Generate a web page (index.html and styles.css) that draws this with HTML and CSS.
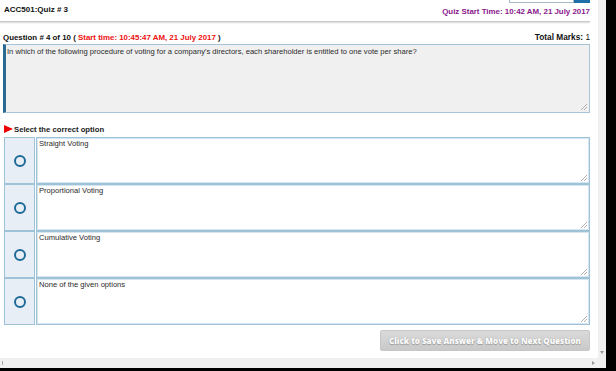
FILE: index.html
```html
<!DOCTYPE html>
<html>
<head>
<meta charset="utf-8">
<link rel="stylesheet" href="styles.css">
</head>
<body>
<div class="window">
  <div class="page">
    <div class="tabbar"><div class="tab"><span class="tab-l"></span><span class="tab-r"></span></div></div>
    <div class="header">
      <div class="quiz-title">ACC501:Quiz # 3</div>
      <div class="quiz-start">Quiz Start Time: 10:42 AM, 21 July 2017</div>
    </div>
    <div class="separator"></div>
    <div class="qrow">
      <div class="qnum">Question # 4 of 10 ( <span class="red">Start time: 10:45:47 AM, 21 July 2017</span> )</div>
      <div class="marks"><b>Total Marks:</b> 1</div>
    </div>
    <div class="question">In which of the following procedure of voting for a company's directors, each shareholder is entitled to one vote per share?<span class="grip"></span></div>
    <div class="select"><span class="flag"></span>Select the correct option</div>
    <div class="options">
      <div class="opt"><div class="radio-cell"><span class="radio"></span></div><div class="opt-text">Straight Voting<span class="grip"></span></div></div>
      <div class="opt"><div class="radio-cell"><span class="radio"></span></div><div class="opt-text">Proportional Voting<span class="grip"></span></div></div>
      <div class="opt"><div class="radio-cell"><span class="radio"></span></div><div class="opt-text">Cumulative Voting<span class="grip"></span></div></div>
      <div class="opt"><div class="radio-cell"><span class="radio"></span></div><div class="opt-text">None of the given options<span class="grip"></span></div></div>
    </div>
    <div class="actions"><button class="next">Click to Save Answer &amp; Move to Next Question</button></div>
  </div>
  <div class="vscroll"><span class="arr-down"></span></div>
  <div class="hscroll"><span class="arr-left"></span><span class="arr-right"></span></div>
  <div class="corner"></div>
</div>
</body>
</html>
```
FILE: styles.css
```css
html, body { margin: 0; padding: 0; }
body { background: #000; width: 616px; height: 371px; overflow: hidden; font-family: "Liberation Sans", Arial, sans-serif; }
.window { width: 606px; height: 368px; display: grid; grid-template-columns: 598px 8px; grid-template-rows: 358px 10px; background: #fff; }
.page { overflow: hidden; background: #fff; padding: 0 8px 0 0; display: flex; flex-direction: column; }
.tabbar { height: 3px; display: flex; justify-content: flex-end; }
.tab { display: flex; width: 81px; height: 3px; }
.tab-l { flex: 1; border: 1px solid #aab8c4; border-top: none; background: #fff; }
.tab-r { width: 16px; background: #1e6ea8; }
.header { height: 18px; display: flex; justify-content: space-between; padding-left: 4px; }
.quiz-title { font-size: 8px; font-weight: bold; color: #111; padding-top: 2px; }
.quiz-start { font-size: 7.9px; font-weight: bold; color: #8a1a8c; padding-top: 4px; }
.separator { height: 3px; background: linear-gradient(#bdbdbd, #e9e9e9 60%, #fff); }
.qrow { display: flex; justify-content: space-between; align-items: center; margin-top: 7px; height: 12px; padding-left: 3px; }
.qnum { font-size: 7.9px; font-weight: bold; color: #111; }
.red { color: #f01010; }
.marks { font-size: 8.3px; color: #111; }
.marks b { font-weight: bold; }
.question { position: relative; margin: 1px 0 0 3px; height: 63px; background: #f0f0f0; border: 1px solid #a7c4d8; border-left: 3px solid #2b6a92; padding: 2px 1px; font-size: 7.6px; color: #2a2a2a; }
.grip { position: absolute; right: 2px; bottom: 2px; width: 6px; height: 6px; background: linear-gradient(135deg, transparent 45%, #b0b0b0 45%, #b0b0b0 55%, transparent 55%, transparent 70%, #b0b0b0 70%, #b0b0b0 80%, transparent 80%); }
.select { display: flex; align-items: center; margin-top: 11px; height: 10px; padding-left: 4px; font-size: 7.7px; font-weight: bold; color: #1a1a1a; }
.flag { width: 0; height: 0; border-top: 4.5px solid transparent; border-bottom: 4.5px solid transparent; border-left: 9px solid #e00; margin-right: 1px; }
.options { display: flex; flex-direction: column; margin-top: 3px; padding-left: 4px; }
.opt { display: flex; gap: 1px; height: 47px; }
.radio-cell { width: 29px; background: #e8eef6; border: 1px solid #9ec2d8; display: flex; align-items: center; justify-content: center; }
.radio { width: 8px; height: 8px; border: 2px solid #1f6b98; border-radius: 50%; }
.opt-text { position: relative; flex: 1; background: #fff; border: 1px solid #9ec2d8; box-shadow: inset 0 0 0 1px #d6e5ef; padding: 1px 2px; font-size: 7.6px; color: #2a2a2a; }
.actions { display: flex; justify-content: flex-end; margin-top: 5px; }
.next { width: 210px; height: 21px; border: 1px solid #c6c6c6; border-radius: 2px; background: linear-gradient(#dadada, #c9c9c9); color: #fbfbfb; font-family: "Open Sans", sans-serif; font-weight: 800; font-size: 8px; padding: 0; text-shadow: 0 1px 1px #9a9a9a, 0 0 1px #a0a0a0; }
.vscroll { background: #f0f0f0; position: relative; }
.arr-down { position: absolute; left: 2px; bottom: 4px; width: 0; height: 0; border-left: 2px solid transparent; border-right: 2px solid transparent; border-top: 3px solid #999; }
.hscroll { background: #f0f0f0; position: relative; }
.arr-left { position: absolute; left: 2px; top: 3px; width: 1px; height: 4px; background: #aaa; }
.arr-right { position: absolute; right: 3px; top: 3px; width: 0; height: 0; border-top: 2px solid transparent; border-bottom: 2px solid transparent; border-left: 3px solid #999; }
.corner { background: #f0f0f0; }
```
